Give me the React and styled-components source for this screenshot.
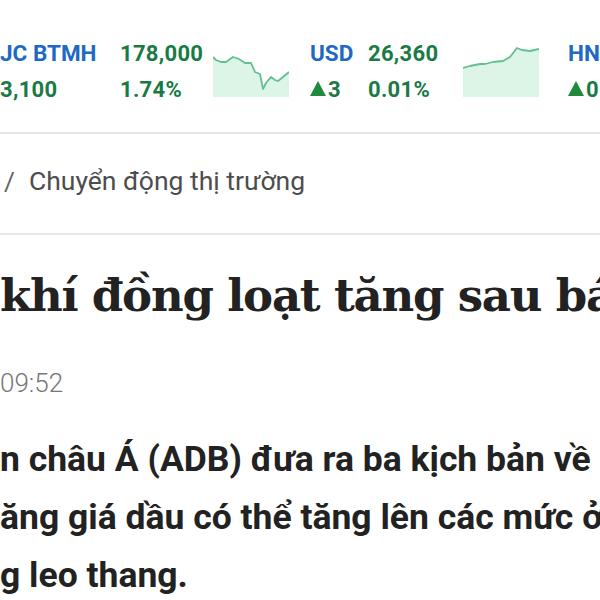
import React from "react";
import styled, { createGlobalStyle } from "styled-components";

const GlobalStyle = createGlobalStyle`
  html, body {
    margin: 0;
    padding: 0;
    background: #fff;
  }
  body {
    font-family: Roboto, "Noto Sans", sans-serif;
    color: #222;
  }
`;

const tickers = [
  {
    label: "JC BTMH",
    change: "3,100",
    price: "178,000",
    pct: "1.74%",
    cols: "120px 93px 77px",
    gap: 20,
    points: [
      [0, 10], [3, 13], [8, 15], [13, 15], [20, 10], [26, 12], [32, 16],
      [38, 16], [42, 25], [47, 27], [50, 42], [53, 36], [58, 30], [62, 33],
      [65, 34], [70, 30], [76, 25],
    ],
  },
  {
    label: "USD",
    change: "3",
    up: true,
    price: "26,360",
    pct: "0.01%",
    cols: "58px 95px 77px",
    gap: 28,
    points: [
      [0, 21], [7, 19], [17, 17], [22, 17], [30, 15], [40, 14], [47, 10],
      [54, 1], [59, 3], [67, 4], [76, 2],
    ],
  },
  {
    label: "HNX",
    change: "0.12",
    up: true,
    price: "245.10",
    pct: "0.05%",
    cols: "70px 95px 77px",
    gap: 20,
    points: [[0, 20], [76, 10]],
  },
];

function Sparkline({ points }) {
  const line = points.map((p) => p.join(",")).join(" ");
  const area = `0,50 ${line} 76,50`;
  return (
    <Chart viewBox="0 0 76 50" width="76" height="50">
      <polygon points={area} fill="#ddf5e7" />
      <polyline
        points={line}
        fill="none"
        stroke="#62bf8f"
        strokeWidth="1.8"
        strokeLinejoin="round"
      />
    </Chart>
  );
}

function App() {
  return (
    <>
      <GlobalStyle />
      <Page>
        <Ticker>
          {tickers.map((t) => (
            <TickerItem key={t.label} $cols={t.cols} $gap={t.gap}>
              <Label>{t.label}</Label>
              <Value>{t.price}</Value>
              <Sparkline points={t.points} />
              <Value>
                {t.up && <Arrow aria-label="tăng" />}
                {t.change}
              </Value>
              <Value>{t.pct}</Value>
            </TickerItem>
          ))}
        </Ticker>

        <Breadcrumb>
          <Slash>/</Slash>
          <span>Chuyển động thị trường</span>
        </Breadcrumb>

        <Title>khí đồng loạt tăng sau báo cáo của ADB</Title>

        <Time>09:52</Time>

        <Lead>
          <LeadLine>n châu Á (ADB) đưa ra ba kịch bản về</LeadLine>
          <LeadLine>ăng giá dầu có thể tăng lên các mức ở</LeadLine>
          <LeadLine>g leo thang.</LeadLine>
        </Lead>
      </Page>
    </>
  );
}

const Page = styled.div`
  width: 600px;
  height: 600px;
  overflow: hidden;
  white-space: nowrap;
`;

const Ticker = styled.div`
  display: flex;
  padding-top: 35px;
  height: 97px;
  border-bottom: 2px solid #e6e6e6;
  box-sizing: content-box;
`;

const TickerItem = styled.div`
  flex: none;
  display: grid;
  grid-template-columns: ${(p) => p.$cols};
  grid-template-rows: 36px 36px;
  align-content: start;
  margin-right: ${(p) => p.$gap}px;
  align-items: center;
`;

const Label = styled.div`
  font-size: 22.5px;
  font-weight: 700;
  color: #2069c3;
`;

const Value = styled.div`
  display: flex;
  align-items: center;
  font-size: 22px;
  font-weight: 700;
  color: #197a44;
  letter-spacing: 0.3px;
`;

const Arrow = styled.span`
  display: inline-block;
  width: 0;
  height: 0;
  border-left: 8px solid transparent;
  border-right: 8px solid transparent;
  border-bottom: 15px solid #1f8a3c;
  margin: 0 2px 1px 0;
`;

const Chart = styled.svg`
  grid-column: 3;
  grid-row: 1 / span 2;
  align-self: start;
  margin-top: 12px;
  display: block;
`;

const Breadcrumb = styled.div`
  display: flex;
  align-items: center;
  gap: 14px;
  height: 101px;
  padding: 0 0 6px 4px;
  box-sizing: border-box;
  font-size: 26.5px;
  color: #4d4d4d;
  border-bottom: 2px solid #e6e6e6;
`;

const Slash = styled.span`
  color: #666;
`;

const Title = styled.h1`
  margin: 29px 0 0;
  font-family: "DejaVu Serif", "Liberation Serif", serif;
  font-weight: 700;
  font-size: 45px;
  line-height: 64px;
  color: #222;
  letter-spacing: -1.2px;
`;

const Time = styled.div`
  margin-top: 40px;
  font-size: 26px;
  font-weight: 300;
  color: #777;
`;

const Lead = styled.div`
  margin-top: 32px;
`;

const LeadLine = styled.div`
  font-size: 35.5px;
  font-weight: 700;
  line-height: 58px;
  color: #222;
`;

export default App;
